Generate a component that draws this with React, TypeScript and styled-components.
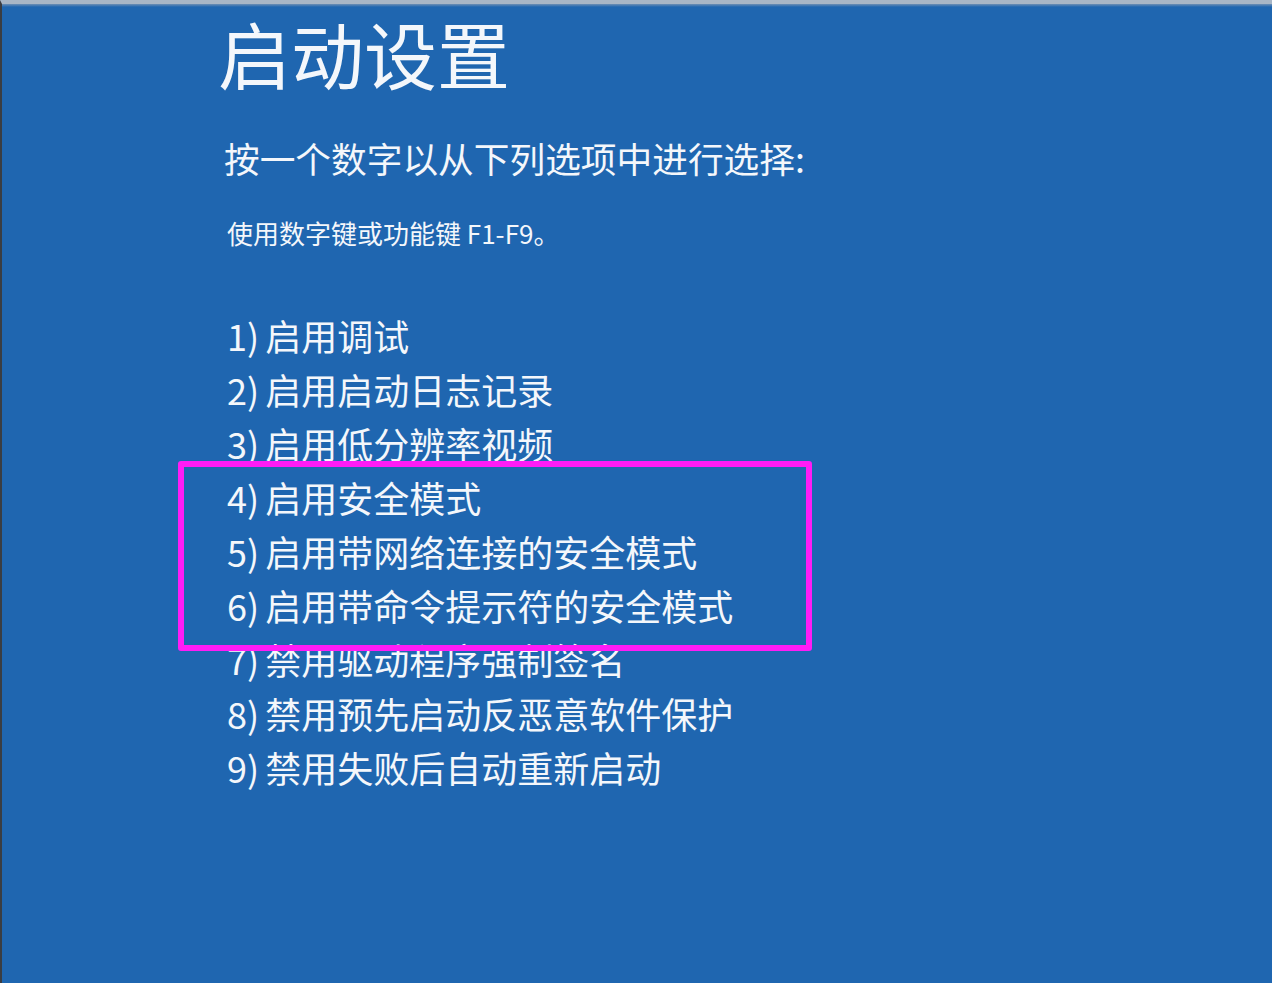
import React from "react";
import styled, { createGlobalStyle } from "styled-components";

const Global = createGlobalStyle`
  html, body { margin: 0; padding: 0; background: #1f66b0; }
  body { overflow: hidden; }
`;

const Screen = styled.div`
  position: relative;
  width: 1272px;
  height: 983px;
  box-sizing: border-box;
  background: #1f66b0;
  border-top: 4px solid #a8b6c6;
  border-left: 2px solid #3a3d42;
  overflow: hidden;
  font-family: "Noto Sans CJK SC", "Noto Sans", sans-serif;
  color: #f4f7fb;
`;

const TopShade = styled.div`
  height: 3px;
  background: linear-gradient(#6e8fb4, #1f66b0);
`;

const Column = styled.div`
  display: flex;
  flex-direction: column;
  padding-left: 222px;
`;

const Title = styled.h1`
  margin: 9px 0 0 -6px;
  font-size: 73px;
  line-height: 72px;
  font-weight: 400;
`;

const Subtitle = styled.div`
  margin-top: 52px;
  font-size: 35.7px;
  line-height: 35px;
  font-weight: 400;
`;

const Hint = styled.div`
  margin: 45px 0 0 3px;
  font-size: 26px;
  line-height: 26px;
`;

const List = styled.ol`
  list-style: none;
  margin: 62px 0 0 3px;
  padding: 0;
  display: flex;
  flex-direction: column;
`;

const Item = styled.li`
  font-size: 36px;
  line-height: 54px;
  white-space: nowrap;
`;

const Num = styled.span`
  margin-right: 6px;
`;

const Highlight = styled.div`
  position: absolute;
  left: 176px;
  top: 457px;
  width: 634px;
  height: 190px;
  box-sizing: border-box;
  border: 6px solid #ff1cf6;
  border-radius: 3px;
  pointer-events: none;
`;

const items = [
  "启用调试",
  "启用启动日志记录",
  "启用低分辨率视频",
  "启用安全模式",
  "启用带网络连接的安全模式",
  "启用带命令提示符的安全模式",
  "禁用驱动程序强制签名",
  "禁用预先启动反恶意软件保护",
  "禁用失败后自动重新启动",
];

export default function App() {
  return (
    <>
      <Global />
      <Screen>
        <TopShade />
        <Column>
          <Title>启动设置</Title>
          <Subtitle>按一个数字以从下列选项中进行选择:</Subtitle>
          <Hint>使用数字键或功能键 F1-F9。</Hint>
          <List>
            {items.map((t, i) => (
              <Item key={i}>
                <Num>{i + 1})</Num>
                {t}
              </Item>
            ))}
          </List>
        </Column>
        <Highlight />
      </Screen>
    </>
  );
}
